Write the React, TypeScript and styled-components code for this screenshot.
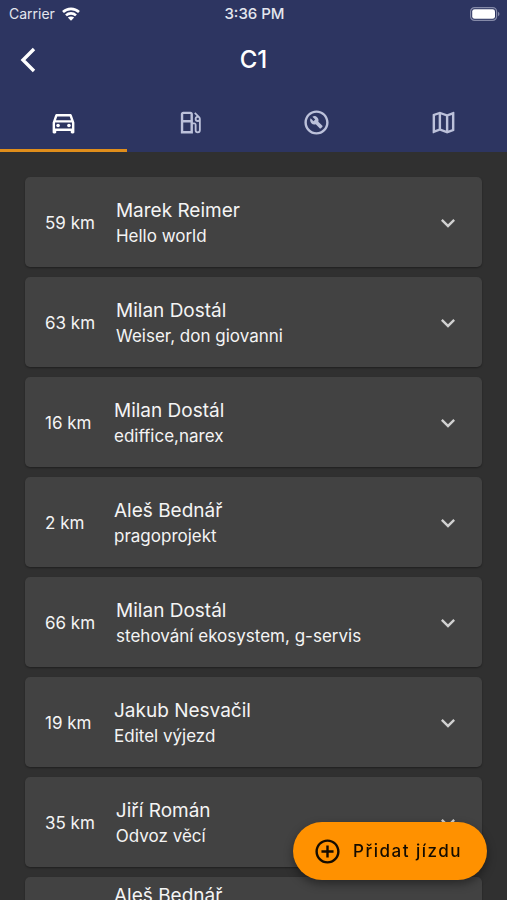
import React, { useState } from "react";
import styled, { createGlobalStyle } from "styled-components";
import {
  MdAddCircleOutline,
  MdExpandMore,
  MdOutlineBuildCircle,
  MdOutlineDirectionsCar,
  MdOutlineLocalGasStation,
  MdOutlineMap,
} from "react-icons/md";

const GlobalStyle = createGlobalStyle`
  * { box-sizing: border-box; }
  html, body, #root { height: 100%; }
  body {
    margin: 0;
    overflow: hidden;
    background: #303030;
    color: #f4f4f4;
    font-family: Inter, Roboto, sans-serif;
  }
  button { font: inherit; color: inherit; border: 0; background: none; padding: 0; cursor: pointer; }
`;

const Screen = styled.div`
  display: flex;
  flex-direction: column;
  height: 100%;
  overflow: hidden;
`;

const Header = styled.header`
  flex: none;
  background: #2d3561;
`;

const StatusBar = styled.div`
  display: grid;
  grid-template-columns: 1fr auto 1fr;
  align-items: center;
  height: 28px;
  padding: 0 7px 0 9px;
  font-size: 14px;
  line-height: 20px;
  color: #e4e6ee;
`;

const Carrier = styled.span`
  display: flex;
  align-items: center;
  gap: 7px;
`;

const Clock = styled.span`
  font-size: 15px;
  font-weight: 500;
`;

const BatterySlot = styled.span`
  display: flex;
  justify-content: flex-end;
`;

const TitleBar = styled.div`
  display: grid;
  grid-template-columns: 56px 1fr 56px;
  align-items: center;
  height: 64px;
`;

const BackButton = styled.button`
  display: flex;
  align-items: center;
  justify-content: center;
  height: 48px;
  color: #ffffff;
`;

const Title = styled.h1`
  margin: 0;
  text-align: center;
  font-size: 24px;
  line-height: 32px;
  font-weight: 500;
  color: #ffffff;
`;

const Tabs = styled.div`
  display: grid;
  grid-template-columns: repeat(4, 1fr);
  height: 60px;
`;

const Tab = styled.button<{ $active: boolean }>`
  display: flex;
  align-items: center;
  justify-content: center;
  border-top: 3px solid transparent;
  border-bottom: 3px solid ${(p) => (p.$active ? "#e08e1b" : "transparent")};
  color: ${(p) => (p.$active ? "#ffffff" : "#bcc1da")};
`;

const List = styled.ul`
  flex: 1;
  min-height: 0;
  overflow: hidden;
  display: flex;
  flex-direction: column;
  gap: 10px;
  margin: 0;
  padding: 25px 25px 0;
  list-style: none;
`;

const Card = styled.li`
  flex: none;
`;

const CardButton = styled.button<{ $tall: boolean }>`
  display: flex;
  align-items: ${(p) => (p.$tall ? "flex-start" : "center")};
  gap: 21px;
  width: 100%;
  min-height: ${(p) => (p.$tall ? 114 : 90)}px;
  padding: ${(p) => (p.$tall ? "6px 20px" : "21px 20px 19px")};
  border-radius: 5px;
  background: #424242;
  box-shadow: 0 1px 2px rgba(0, 0, 0, 0.35);
  text-align: left;
`;

const Distance = styled.span`
  flex: none;
  min-width: 48px;
  font-size: 17px;
  line-height: 24px;
`;

const Info = styled.span`
  flex: 1;
  min-width: 0;
  display: flex;
  flex-direction: column;
`;

const Name = styled.span`
  font-size: 19px;
  line-height: 26px;
`;

const Note = styled.span`
  font-size: 17px;
  line-height: 24px;
`;

const ChevronIcon = styled(MdExpandMore)`
  flex: none;
  align-self: center;
  color: #d0d0d0;
`;

const AddButton = styled.button`
  position: fixed;
  right: 20px;
  bottom: 20px;
  display: flex;
  align-items: center;
  gap: 11px;
  height: 58px;
  padding: 0 25px 0 20px;
  border-radius: 29px;
  background: #ff9100;
  color: #140c00;
  box-shadow: 0 4px 10px rgba(0, 0, 0, 0.4);
  font-size: 17px;
  font-weight: 500;
  letter-spacing: 1.5px;
`;

const WifiIcon = () => (
  <svg width="18" height="14" viewBox="0 0 18 14" fill="none" stroke="#ffffff" strokeWidth="2.6" aria-hidden="true">
    <path d="M1 5C5.400.8 12.600.8 17 5" />
    <path d="M4 8.400c2.800-2.700 7.200-2.700 10 0" />
    <path d="M9 13.800 5.800 10.600c1.800-1.600 4.600-1.600 6.400 0Z" fill="#ffffff" stroke="none" />
  </svg>
);

const BatteryIcon = () => (
  <svg width="30" height="14" viewBox="0 0 30 14" aria-hidden="true">
    <rect x="0.6" y="0.6" width="26" height="12.8" rx="4" fill="none" stroke="#858aa8" strokeWidth="1.2" />
    <rect x="2.2" y="2.2" width="22.8" height="9.6" rx="2.4" fill="#ffffff" />
    <path d="M28 4.800c2 .8 2 3.600 0 4.400Z" fill="#858aa8" />
  </svg>
);

const BackIcon = () => (
  <svg width="16" height="26" viewBox="0 0 16 26" fill="none" stroke="currentColor" strokeWidth="3.4" aria-hidden="true">
    <path d="M14 2 3 13l11 11" />
  </svg>
);

const tabs = [
  { label: "Jízdy", icon: <MdOutlineDirectionsCar size={29} /> },
  { label: "Tankování", icon: <MdOutlineLocalGasStation size={29} /> },
  { label: "Servis", icon: <MdOutlineBuildCircle size={29} /> },
  { label: "Mapa", icon: <MdOutlineMap size={29} /> },
];

type Trip = { distance?: string; name: string; note?: string; tall?: boolean };

const trips: Trip[] = [
  { distance: "59 km", name: "Marek Reimer", note: "Hello world" },
  { distance: "63 km", name: "Milan Dostál", note: "Weiser, don giovanni" },
  { distance: "16 km", name: "Milan Dostál", note: "ediffice,narex" },
  { distance: "2 km", name: "Aleš Bednář", note: "pragoprojekt" },
  { distance: "66 km", name: "Milan Dostál", note: "stehování ekosystem, g-servis" },
  { distance: "19 km", name: "Jakub Nesvačil", note: "Editel výjezd" },
  { distance: "35 km", name: "Jiří Román", note: "Odvoz věcí" },
  { name: "Aleš Bednář", tall: true },
];

export default function App() {
  const [active, setActive] = useState(0);
  return (
    <Screen>
      <GlobalStyle />
      <Header>
        <StatusBar>
          <Carrier>
            Carrier
            <WifiIcon />
          </Carrier>
          <Clock>3:36 PM</Clock>
          <BatterySlot>
            <BatteryIcon />
          </BatterySlot>
        </StatusBar>
        <TitleBar>
          <BackButton aria-label="Zpět">
            <BackIcon />
          </BackButton>
          <Title>C1</Title>
        </TitleBar>
        <Tabs role="tablist">
          {tabs.map((tab, i) => (
            <Tab
              key={tab.label}
              role="tab"
              aria-label={tab.label}
              aria-selected={i === active}
              $active={i === active}
              onClick={() => setActive(i)}
            >
              {tab.icon}
            </Tab>
          ))}
        </Tabs>
      </Header>
      <List>
        {trips.map((trip, i) => (
          <Card key={i}>
            <CardButton $tall={Boolean(trip.tall)}>
              <Distance>{trip.distance}</Distance>
              <Info>
                <Name>{trip.name}</Name>
                {trip.note && <Note>{trip.note}</Note>}
              </Info>
              <ChevronIcon size={28} />
            </CardButton>
          </Card>
        ))}
      </List>
      <AddButton>
        <MdAddCircleOutline size={29} />
        Přidat jízdu
      </AddButton>
    </Screen>
  );
}
